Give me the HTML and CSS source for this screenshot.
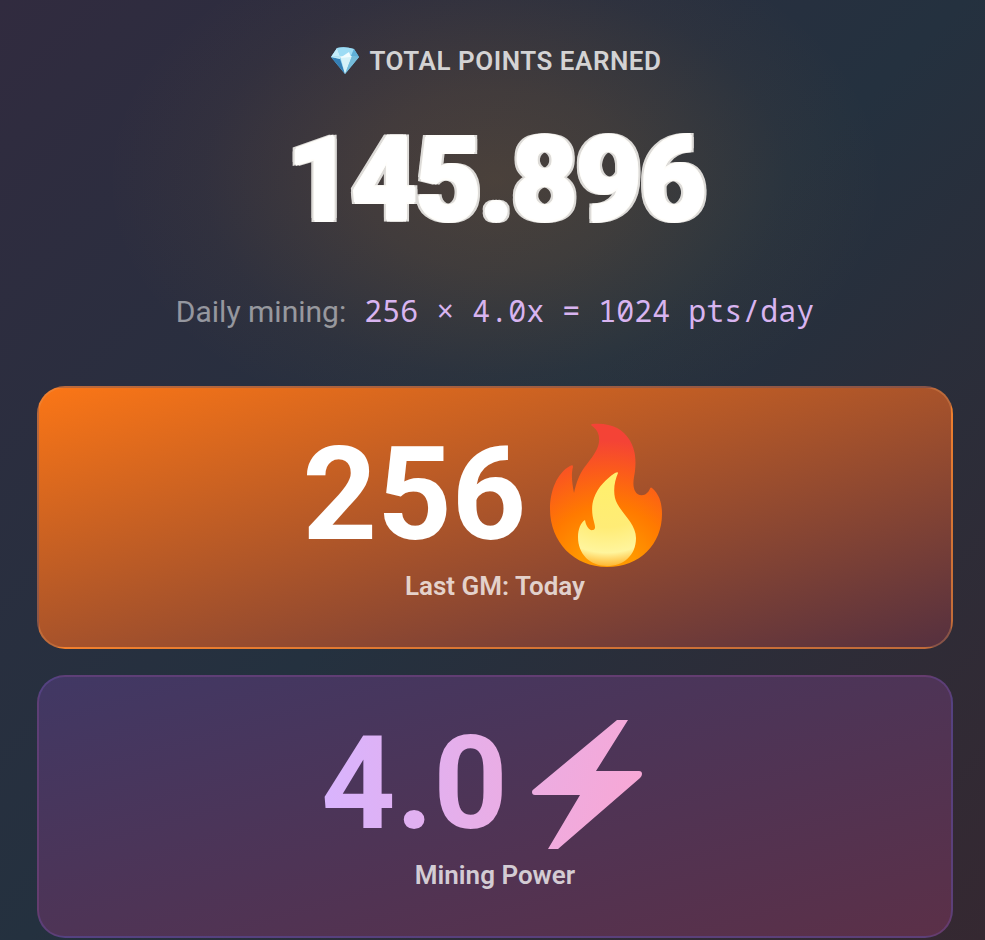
FILE: index.html
```
<!DOCTYPE html>
<html lang="en">
<head>
  <meta charset="UTF-8">
  <meta name="viewport" content="width=device-width, initial-scale=1">
  <title>Total Points</title>
  <link rel="stylesheet" href="styles.css">
</head>
<body>
  <main class="dashboard">
    <section class="points">
      <h1 class="points-title">
        <svg class="gem" viewBox="0 0 34 30" aria-hidden="true">
          <path fill="#7cc8ee" d="M9 2Q17 0 26 3L31 11L17 28L3 11Z"/>
          <path fill="#c5ecfa" d="M9 2L12 10L3 11Z"/>
          <path fill="#9ddcf4" d="M9 2Q17 0 26 3L23 10L12 10Z"/>
          <path fill="#5fb0d8" d="M26 3L31 11L23 10Z"/>
          <path fill="#347fb5" d="M3 11L12 13L17 28Z"/>
          <path fill="#bfe8f5" d="M3 11L12 10L12 13Z"/>
          <path fill="#d5f2f8" d="M12 10L24 10L17 28Z"/>
          <path fill="#75bcda" d="M24 10L31 11L17 28Z"/>
          <path fill="#f1fdff" d="M12 12L21 6L23 11Z"/>
        </svg>
        <span>Total Points Earned</span>
      </h1>
      <div class="points-value">145.896</div>
      <p class="daily">
        <span>Daily mining:</span>
        <span class="formula">256 × 4.0x = 1024 pts/day</span>
      </p>
    </section>

    <section class="cards">
      <div class="card streak">
        <div class="card-value">
          <span>256</span>
          <svg class="fire" viewBox="-1 1 161 152" aria-hidden="true">
            <defs>
              <radialGradient id="flame" gradientUnits="userSpaceOnUse" cx="80" cy="153" r="145">
                <stop offset="0.2" stop-color="#ff9800"/>
                <stop offset="0.45" stop-color="#ff7a00"/>
                <stop offset="0.7" stop-color="#fb5a1c"/>
                <stop offset="0.9" stop-color="#f44336"/>
              </radialGradient>
              <radialGradient id="core" gradientUnits="userSpaceOnUse" cx="80" cy="60" r="90">
                <stop offset="0" stop-color="#fff06c"/>
                <stop offset="0.55" stop-color="#ffec76"/>
                <stop offset="0.83" stop-color="#fff59d"/>
                <stop offset="1" stop-color="#ffae22"/>
              </radialGradient>
            </defs>
            <path fill="url(#flame)" d="M65 6C83 4 96 11 102 21C109 32 109 43 108 53C107 60 105 67 108 73C111 79 118 78 121 74C123 72 123 68 125 70C133 77 135 86 135 96C135 126 113 149 80 149C47 149 23 124 23 91C23 73 30 55 43 48C45 47 46 47 46 49C44 56 45 65 47 75C49 65 53 54 60 46C68 36 73 28 72 20C72 14 68 10 65 8C64 7 64 6 65 6Z"/>
            <path fill="url(#core)" d="M91 55C88 62 86 71 88 80C91 93 109 104 109 120C109 138 96 148 80 148C63 148 51 136 51 119C51 111 54 104 58 102C59 108 62 113 66 112C69 111 68 108 67 104C65 97 64 88 67 80C71 69 79 61 88 55C90 54 91 54 91 55Z"/>
          </svg>
        </div>
        <div class="card-label">Last GM: Today</div>
      </div>

      <div class="card power">
        <div class="card-value">
          <span class="power-value">4.0</span>
          <svg class="bolt" viewBox="0 0 161 129" aria-hidden="true">
            <defs>
              <linearGradient id="bolt-fill" x1="0" y1="0" x2="1" y2="0.4">
                <stop offset="0" stop-color="#eaade4"/>
                <stop offset="1" stop-color="#f7a8d6"/>
              </linearGradient>
            </defs>
            <path fill="url(#bolt-fill)" d="M109 0H120L88 51H131Q134 51 134 54Q134 56 132 58L50 129H40L72 75H27Q24 75 24 72Q24 70 26 69Z"/>
          </svg>
        </div>
        <div class="card-label">Mining Power</div>
      </div>
    </section>
  </main>
</body>
</html>
```
FILE: styles.css
```
* {
  box-sizing: border-box;
}

body {
  margin: 0;
  min-height: 100vh;
  font-family: Roboto, sans-serif;
  color: #fff;
  background: linear-gradient(135deg, #312b3f 0%, #24313f 50%, #352831 100%);
}

.dashboard {
  padding: 0 32px 2px 37px;
}

.points {
  display: flex;
  flex-direction: column;
  align-items: center;
  padding: 43px 0 53px;
  background: radial-gradient(ellipse 390px 260px at 50% 180px, rgba(230, 145, 40, 0.18), rgba(230, 145, 40, 0.13) 35%, rgba(230, 145, 40, 0.03) 75%, rgba(230, 145, 40, 0) 100%);
}

.points-title {
  display: flex;
  align-items: center;
  gap: 7px;
  margin: 0 0 43px;
  font-size: 26px;
  line-height: 36px;
  font-weight: 600;
  letter-spacing: 0.02em;
  text-transform: uppercase;
  color: rgba(255, 255, 255, 0.78);
}

.gem {
  width: 34px;
  height: 30px;
}

.points-value {
  margin-bottom: 51px;
  font-size: 116px;
  line-height: 116px;
  font-weight: 900;
  letter-spacing: -3px;
  text-shadow:
    -1px 0 #fffefb,
    1px 0 #fffefb,
    0 -2px #fffefb,
    0 2px #fffefb,
    -3px -2px #dddbd8,
    3px -2px #dddbd8,
    -3px 2px #dddbd8,
    3px 2px #dddbd8;
}

.daily {
  display: flex;
  align-items: baseline;
  gap: 18px;
  margin: 0;
  font-size: 30px;
  line-height: 43px;
  color: rgba(255, 255, 255, 0.5);
}

.formula {
  font-family: "Droid Sans Mono", "Noto Sans Mono", "DejaVu Sans Mono", monospace;
  color: #d8b4f0;
}

.cards {
  display: grid;
  gap: 26px;
}

.card {
  padding: 42px 43px 43px;
  border: 2px solid;
  border-radius: 28px;
  text-align: center;
}

.streak {
  border-color: rgba(230, 150, 90, 0.35);
  background-image: linear-gradient(to bottom right, #fb7616, #55303f);
}

.power {
  border-color: rgba(130, 90, 200, 0.3);
  background-image: linear-gradient(to bottom right, #413864, #5b3048);
}

.card-value {
  display: flex;
  align-items: center;
  justify-content: center;
  height: 130px;
  font-size: 130px;
  line-height: 130px;
  font-weight: 700;
}

.fire {
  flex: none;
  width: 161px;
  height: 152px;
}

.bolt {
  flex: none;
  width: 161px;
  height: 129px;
}

.power-value {
  color: transparent;
  background: linear-gradient(to right, #d8b4fe, #eaade4);
  background-clip: text;
  -webkit-background-clip: text;
}

.card-label {
  margin-top: 8px;
  font-size: 26px;
  line-height: 36px;
  font-weight: 600;
  color: rgba(255, 255, 255, 0.76);
}
```
